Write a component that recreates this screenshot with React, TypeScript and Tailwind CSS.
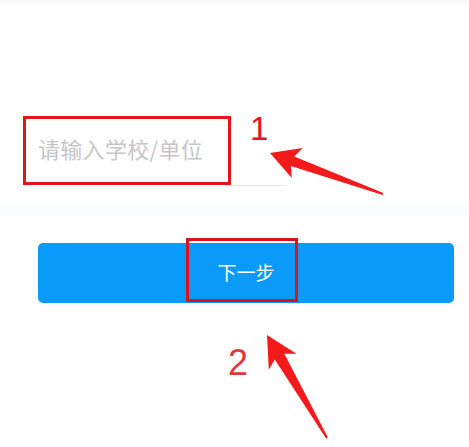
const arrow = (tip: [number, number], tail: [number, number], head: number, half: number, neck: number, neckHalf: number) => {
  const dx = tail[0] - tip[0];
  const dy = tail[1] - tip[1];
  const len = Math.hypot(dx, dy);
  const u = [dx / len, dy / len];
  const n = [-u[1], u[0]];
  const at = (a: number, b: number) => `${(tip[0] + u[0] * a + n[0] * b).toFixed(1)},${(tip[1] + u[1] * a + n[1] * b).toFixed(1)}`;
  return [
    at(0, 0),
    at(head, -half),
    at(neck, -neckHalf),
    at(len, -1),
    at(len, 1),
    at(neck, neckHalf),
    at(head, half),
  ].join(" ");
};

export default function App() {
  return (
    <div className="relative w-[469px] h-[447px] overflow-hidden bg-white font-['Liberation_Sans','Noto_Sans_CJK_SC',sans-serif]">
      <div className="h-[8px] bg-gradient-to-b from-[#f8f8f8] to-white" />
      <div className="pt-[108px] pl-[23px]">
        {/* input row */}
        <div className="flex items-stretch">
          <div className="w-[208px] h-[69px] border-[3px] border-[#e5141c] flex items-center pl-[12px] pb-[5px] text-[22px] tracking-[0.3px] text-[#c6c6c6] font-['Noto_Sans_CJK_SC',sans-serif]">
            请输入学校/单位
          </div>
          <div className="w-[55px] border-b border-[#e8e8e8] -mb-[1px]">
            <span className="block pl-[19px] -mt-[7px] text-[33px] leading-[40px] text-[#e5141c]">1</span>
          </div>
        </div>

        <div className="h-[22px] mt-[14px] -ml-[23px] bg-gradient-to-b from-white via-[#fafbfd] to-white" />

        {/* button */}
        <div className="relative mt-[22px] ml-[15px] w-[416px] h-[60px] rounded-[5px] bg-[#0a9afa] flex items-center justify-center pb-[1px]">
          <span className="text-[19px] text-white font-['Noto_Sans_CJK_SC',sans-serif]">下一步</span>
          <div className="absolute left-[148px] -top-[5px] w-[112px] h-[64px] border-[3px] border-[#d9141c]" />
        </div>

        <div className="mt-[40px] pl-[205px] text-[36px] leading-[40px] text-[#e0353d]">2</div>
      </div>

      <svg className="absolute inset-0 pointer-events-none" width="469" height="447" viewBox="0 0 469 447">
        <polygon points={arrow([270, 153], [383, 194], 29, 16, 24, 5)} fill="#f21a1a" />
        <polygon points={arrow([267, 335], [327, 438], 31, 16, 25, 5.5)} fill="#f21a1a" />
      </svg>
    </div>
  );
}
